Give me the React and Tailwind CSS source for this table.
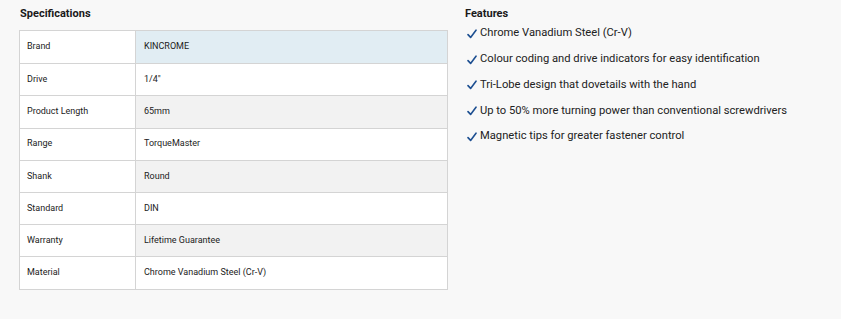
import React from "react";

const specs = [
  ["Brand", "KINCROME"],
  ["Drive", "1/4\""],
  ["Product Length", "65mm"],
  ["Range", "TorqueMaster"],
  ["Shank", "Round"],
  ["Standard", "DIN"],
  ["Warranty", "Lifetime Guarantee"],
  ["Material", "Chrome Vanadium Steel (Cr-V)"],
];

const features = [
  "Chrome Vanadium Steel (Cr-V)",
  "Colour coding and drive indicators for easy identification",
  "Tri-Lobe design that dovetails with the hand",
  "Up to 50% more turning power than conventional screwdrivers",
  "Magnetic tips for greater fastener control",
];

export default function App() {
  return (
    <div
      className="w-[841px] h-[319px] bg-[#f8f8f8] text-[#222] flex"
      style={{ fontFamily: "Roboto, 'Liberation Sans', sans-serif" }}
    >
      <div className="w-[429px] ml-[19px] pt-[7px]">
        <h3 className="text-[11px] font-bold leading-[14px] pl-px text-[#1a1a1a]">Specifications</h3>
        <div className="mt-[9px] border border-[#d4d4d4] flex flex-col">
          {specs.map(([k, v], i) => {
            const bg = i === 0 ? "bg-[#e1edf3]" : i % 2 === 0 ? "bg-[#f2f2f2]" : "bg-white";
            return (
              <div
                key={k}
                className={`flex h-[32.2px] ${i > 0 ? "border-t border-[#d4d4d4]" : ""}`}
              >
                <div className="w-[116px] bg-white border-r border-[#d4d4d4] flex items-center pl-[7px] text-[9px]">
                  {k}
                </div>
                <div className={`flex-1 ${bg} flex items-center pl-[8px] text-[9px]`}>{v}</div>
              </div>
            );
          })}
        </div>
      </div>
      <div className="ml-[17px] pt-[7px]">
        <h3 className="text-[11px] font-bold leading-[14px] text-[#1a1a1a]">Features</h3>
        <ul className="flex flex-col">
          {features.map((f) => (
            <li key={f} className="flex items-center h-[25.7px] text-[11.2px]">
              <span className="w-[15px] pl-[2px] flex items-center">
                <svg width="10" height="10" viewBox="0 0 10 10" fill="none">
                  <path d="M1 5.6 L3.6 8.4 L9 1.2" stroke="#1d4f91" strokeWidth="1.6" strokeLinecap="round" strokeLinejoin="round" />
                </svg>
              </span>
              <span>{f}</span>
            </li>
          ))}
        </ul>
      </div>
    </div>
  );
}
